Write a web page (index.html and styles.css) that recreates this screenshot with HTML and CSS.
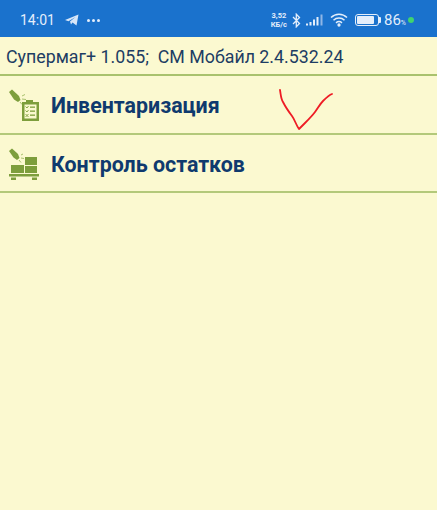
FILE: index.html
```html
<!DOCTYPE html>
<html lang="ru">
<head>
    <meta charset="UTF-8">
    <meta name="viewport" content="width=device-width, initial-scale=1.0">
    <title>Супермаг</title>
    <link rel="stylesheet" href="styles.css">
</head>
<body>
    <div class="statusbar">
        <div class="status-left">
            <span class="time">14:01</span>
            <svg class="tg" width="14" height="12" viewBox="0 0 14 12"><path d="M0 6 L13.500 0.500 L11.500 11.500 L7.500 8.500 L6 10.500 L5 7.500 L10.500 3 L3.500 7.200 Z" fill="#d7e6f8"/></svg>
            <span class="dots">
                <i></i><i></i><i></i>
            </span>
        </div>
        <div class="status-right">
            <span class="speed">3,52<br>КБ/с</span>
            <svg width="9" height="15" viewBox="0 0 9 15"><path d="M1 4 L7.500 10.500 L4.300 13.800 V1.200 L7.500 4.500 L1 11" fill="none" stroke="#e3eefb" stroke-width="1.300"/></svg>
            <svg class="signal" width="19" height="12" viewBox="0 0 19 12">
                <rect x="0" y="9.500" width="2" height="2" fill="#e3eefb"/>
                <rect x="3.500" y="8" width="2" height="3.500" fill="#e3eefb"/>
                <rect x="7" y="5.500" width="2" height="6" fill="#e3eefb"/>
                <rect x="10.500" y="3" width="2" height="8.500" fill="#e3eefb"/>
                <rect x="14.500" y="0.500" width="2" height="11" fill="#8fb6e6"/>
            </svg>
            <svg width="18" height="14" viewBox="0 0 18 14" fill="none" stroke="#e3eefb" stroke-width="1.500">
                <path d="M1 4.500 C5.500 0 12.500 0 17 4.500"/>
                <path d="M3.500 7.200 C6.500 4.400 11.500 4.400 14.500 7.200"/>
                <path d="M6 9.800 C7.800 8.300 10.200 8.300 12 9.800"/>
                <circle cx="9" cy="12" r="0.900" fill="#e3eefb"/>
            </svg>
            <span class="battery"><span class="battery-fill"></span></span>
            <span class="percent">86<small>%</small></span>
            <span class="dot-green"></span>
        </div>
    </div>

    <div class="version">Супермаг+ 1.055;&nbsp; СМ Мобайл 2.4.532.24</div>

    <div class="menu">
        <div class="menu-item">
            <svg class="menu-icon" width="34" height="34" viewBox="0 0 34 34">
                <g fill="#7d9e3c">
                    <path d="M1 4 L4 1.500 L11 8 L12.500 12 L10 14 L6 11.500 Z"/>
                    <path d="M14 8 L17 6.500 M14 11 L18 11.500 M12 14 L14 16.500" stroke="#a9c26d" stroke-width="1"/>
                    <path fill-rule="evenodd" d="M14 14 H18 V12 H25 V14 H31 V33 H14 Z M16.500 16.500 V30.500 H28.500 V16.500 Z"/>
                    <rect x="22" y="18.500" width="5" height="1.300"/>
                    <rect x="22" y="22.500" width="5" height="1.300"/>
                    <rect x="22" y="26.500" width="5" height="1.300"/>
                </g>
                <path d="M17.500 18.500 L19 20 L20.500 18 M17.500 22.500 L19 24 L20.500 22 M17.500 26 L20.500 29 M20.500 26 L17.500 29" fill="none" stroke="#7d9e3c" stroke-width="0.900"/>
            </svg>
            <span class="menu-label">Инвентаризация</span>
        </div>
        <div class="menu-item">
            <svg class="menu-icon" width="34" height="34" viewBox="0 0 34 34">
                <g fill="#7d9e3c">
                    <path d="M1 4 L4 1.500 L10 7 L11.500 11 L9 13 L5.500 10.500 Z"/>
                    <path d="M13 8 L15 7 M13 11 L16 11.500 M11 13 L13 15.500" stroke="#a9c26d" stroke-width="1"/>
                    <rect x="17" y="10" width="12" height="8"/>
                    <rect x="3" y="18" width="13" height="8"/>
                    <rect x="17" y="19" width="12" height="7"/>
                    <rect x="1" y="27" width="30" height="2.500"/>
                    <rect x="3" y="30.500" width="5" height="2.500"/>
                    <rect x="24" y="30.500" width="5" height="2.500"/>
                </g>
            </svg>
            <span class="menu-label">Контроль остатков</span>
        </div>
    </div>

    <svg class="check" width="437" height="510" viewBox="0 0 437 510">
        <path d="M280 90 C281 96 281 99 283 102 C286 108 289 112 292 116 C295 120 296 125 299 129 C301 127 303 125 305 123 C309 119 312 116 315 112 C318 108 320 104 323 101 C326 98 329 95 332 94" fill="none" stroke="#ee1c25" stroke-width="1.800" stroke-linecap="round" stroke-linejoin="round"/>
    </svg>
</body>
</html>
```

FILE: styles.css
```css
html, body {
    height: 100%;
}
body {
    margin: 0;
    background-color: #fbf9d0;
    font-family: "Roboto", "Liberation Sans", sans-serif;
    overflow: hidden;
}
.statusbar {
    height: 37px;
    background-color: #1a72cd;
    display: flex;
    justify-content: space-between;
    align-items: center;
    padding: 3px 23px 0 20px;
    box-sizing: border-box;
    color: #e3eefb;
}
.status-left {
    display: flex;
    align-items: center;
}
.time {
    font-size: 14px;
    margin-right: 10px;
}
.tg {
    margin-right: 8px;
}
.dots {
    display: flex;
    gap: 2px;
}
.dots i {
    width: 3px;
    height: 3px;
    border-radius: 50%;
    background-color: #e3eefb;
}
.status-right {
    display: flex;
    align-items: center;
    gap: 5px;
}
.speed {
    font-size: 7.500px;
    line-height: 9px;
    font-weight: 700;
    text-align: center;
}
.signal {
    margin: 0;
}
.battery {
    width: 24px;
    height: 12px;
    border: 1px solid #e3eefb;
    border-radius: 3px;
    padding: 1px;
    box-sizing: border-box;
    margin-left: 2px;
    position: relative;
    display: flex;
}
.battery::after {
    content: "";
    position: absolute;
    right: -3px;
    top: 2px;
    width: 2px;
    height: 6px;
    background-color: #e3eefb;
    border-radius: 0 1px 1px 0;
}
.battery-fill {
    width: 86%;
    background-color: #e3eefb;
    border-radius: 1px;
}
.percent {
    font-size: 15px;
}
.percent small {
    font-size: 7px;
}
.dot-green {
    width: 6px;
    height: 6px;
    border-radius: 50%;
    background-color: #3fd46f;
    margin-left: -3px;
}
.version {
    height: 39px;
    box-sizing: border-box;
    padding: 1px 0 0 6px;
    display: flex;
    align-items: center;
    font-size: 17.800px;
    color: #1d3d63;
    border-bottom: 2px solid #a9c26d;
}
.menu-item {
    height: 58.500px;
    box-sizing: border-box;
    display: flex;
    align-items: center;
    padding-left: 8px;
    border-bottom: 2px solid #b3c97a;
}
.menu-icon {
    flex-shrink: 0;
    margin: 2px 9px 0 0;
}
.menu-label {
    font-size: 21.400px;
    font-weight: 700;
    color: #0f3a6e;
    padding-top: 3px;
}
.check {
    position: absolute;
    top: 0;
    left: 0;
    pointer-events: none;
}
```
